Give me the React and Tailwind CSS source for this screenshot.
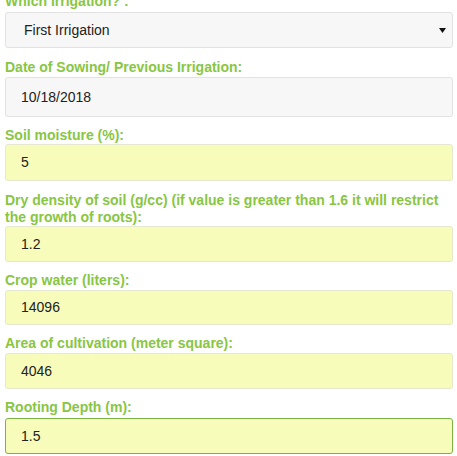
import React from "react";

const fields = [
  { label: "Which Irrigation? :", value: "First Irrigation", lmt: "mt-[-7px]", lh: "leading-[16px]", bmt: "mt-[3px]", h: "h-[36px]", kind: "select" },
  { label: "Date of Sowing/ Previous Irrigation:", value: "10/18/2018", lmt: "mt-[11px]", lh: "leading-[16px]", bmt: "mt-[2px]", h: "h-[40px]", kind: "gray" },
  { label: "Soil moisture (%):", value: "5", lmt: "mt-[10px]", lh: "leading-[16px]", bmt: "mt-[1px]", h: "h-[37px]", kind: "yellow" },
  { label: "Dry density of soil (g/cc) (if value is greater than 1.6 it will restrict the growth of roots):", value: "1.2", lmt: "mt-[11px]", lh: "leading-[17px]", bmt: "mt-0", h: "h-[36px]", kind: "yellow" },
  { label: "Crop water (liters):", value: "14096", lmt: "mt-[10px]", lh: "leading-[16px]", bmt: "mt-[2px]", h: "h-[35px]", kind: "yellow" },
  { label: "Area of cultivation (meter square):", value: "4046", lmt: "mt-[10px]", lh: "leading-[16px]", bmt: "mt-[2px]", h: "h-[36px]", kind: "yellow" },
  { label: "Rooting Depth (m):", value: "1.5", lmt: "mt-[10px]", lh: "leading-[16px]", bmt: "mt-[3px]", h: "h-[36px]", kind: "focus" },
];

const boxKind = {
  select: "bg-[#f7f7f7] border-[#e2e2e2] pl-[18px]",
  gray: "bg-[#f7f7f7] border-[#e2e2e2] pl-[15px]",
  yellow: "bg-[#f7fcbb] border-[#e6e8cf] pl-[15px]",
  focus: "bg-[#f7fcbb] border-[#7cb342] pl-[15px]",
};

export default function App() {
  return (
    <div className="w-[457px] h-[456px] overflow-hidden bg-white font-['Liberation_Sans',Arial,sans-serif]">
      <div className="flex flex-col w-[448px] ml-[5px]">
        {fields.map((f, i) => (
          <div key={i} className="flex flex-col">
            <div className={`${f.lmt} ${f.lh} text-[14px] font-bold text-[#88c643]`}>{f.label}</div>
            <div className={`${f.bmt} ${f.h} ${boxKind[f.kind]} border rounded-[3px] flex items-center justify-between pr-[6px] text-[14px] text-[#222]`}>
              <span>{f.value}</span>
              {f.kind === "select" && (
                <svg width="7" height="5" viewBox="0 0 7 5">
                  <polygon points="0,0 7,0 3.5,5" fill="#111" />
                </svg>
              )}
            </div>
          </div>
        ))}
      </div>
    </div>
  );
}
